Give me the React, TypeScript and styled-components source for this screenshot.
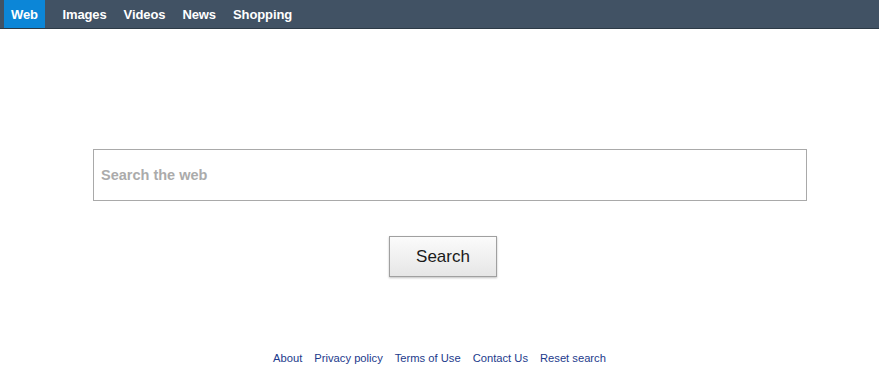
import React from "react";
import styled, { createGlobalStyle } from "styled-components";

const Global = createGlobalStyle`
  html, body { margin: 0; padding: 0; background: #fff; }
  body { font-family: Arial, "Liberation Sans", sans-serif; }
  * { box-sizing: border-box; }
`;

const NavBar = styled.nav`
  display: flex;
  align-items: stretch;
  height: 29px;
  background: #415264;
  border-bottom: 1px solid #2c3a46;
  padding-left: 4px;
`;

const NavItem = styled.a<{ $active?: boolean }>`
  display: flex;
  align-items: center;
  padding: 0 ${(p) => (p.$active ? "7px" : "8.5px")};
  margin-right: ${(p) => (p.$active ? "9px" : "0")};
  background: ${(p) => (p.$active ? "#0c86d7" : "transparent")};
  color: #fff;
  font-weight: bold;
  font-size: 13px;
  letter-spacing: -0.1px;
  text-decoration: none;
`;

const Main = styled.main`
  display: flex;
  flex-direction: column;
  padding-top: 120px;
`;

const InputRow = styled.div`
  padding-left: 93px;
`;

const SearchInput = styled.input`
  width: 714px;
  height: 52px;
  border: 1px solid #a9a9a9;
  padding: 0 7px;
  font-family: Arial, "Liberation Sans", sans-serif;
  font-size: 14.5px;
  font-weight: bold;
  outline: none;
  &::placeholder { color: #ababab; }
`;

const ButtonRow = styled.div`
  display: flex;
  justify-content: center;
  margin-top: 35px;
  padding-left: 7px;
`;

const SearchButton = styled.button`
  width: 108px;
  height: 41px;
  border: 1px solid #a0a0a0;
  background: linear-gradient(#fbfbfb, #e6e6e6);
  box-shadow: 0 1px 2px rgba(0, 0, 0, 0.25);
  font-family: Arial, "Liberation Sans", sans-serif;
  font-size: 17px;
  color: #1a1a1a;
  padding: 0;
`;

const Footer = styled.footer`
  display: flex;
  justify-content: center;
  gap: 12px;
  margin-top: 75px;
`;

const FooterLink = styled.a`
  font-size: 11.2px;
  color: #1c3a8c;
  text-decoration: none;
`;

export default function App() {
  return (
    <>
      <Global />
      <NavBar>
        <NavItem $active href="#">Web</NavItem>
        <NavItem href="#">Images</NavItem>
        <NavItem href="#">Videos</NavItem>
        <NavItem href="#">News</NavItem>
        <NavItem href="#">Shopping</NavItem>
      </NavBar>
      <Main>
        <InputRow>
          <SearchInput placeholder="Search the web" />
        </InputRow>
        <ButtonRow>
          <SearchButton>Search</SearchButton>
        </ButtonRow>
        <Footer>
          <FooterLink href="#">About</FooterLink>
          <FooterLink href="#">Privacy policy</FooterLink>
          <FooterLink href="#">Terms of Use</FooterLink>
          <FooterLink href="#">Contact Us</FooterLink>
          <FooterLink href="#">Reset search</FooterLink>
        </Footer>
      </Main>
    </>
  );
}
